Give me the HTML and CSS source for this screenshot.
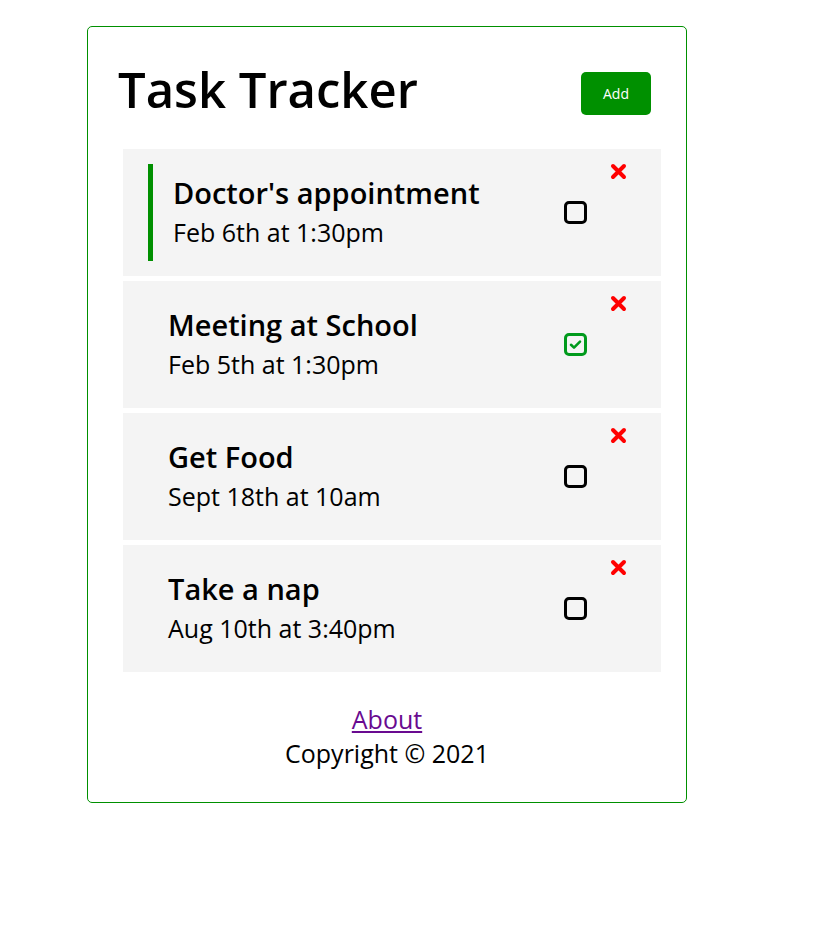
FILE: index.html
```html
<!DOCTYPE html>
<html>
<head>
<meta charset="utf-8">
<title>Task Tracker</title>
<link rel="stylesheet" href="styles.css">
</head>
<body>
<div class="container">
  <header class="header">
    <h1 class="title">Task Tracker</h1>
    <button class="btn">Add</button>
  </header>
  <div class="tasks">
    <div class="task">
      <div class="task-text reminder">
        <h3 class="task-name">Doctor's appointment</h3>
        <p class="task-day">Feb 6th at 1:30pm</p>
      </div>
      <svg class="check" viewBox="0 0 23 23" width="23" height="23"><rect x="1.5" y="1.5" width="20" height="20" rx="3.5" fill="none" stroke="#000" stroke-width="3"/></svg>
      <svg class="del" viewBox="0 0 17 17" width="17" height="17"><path d="M3 3L14 14M14 3L3 14" stroke="#ff0000" stroke-width="4" stroke-linecap="round"/></svg>
    </div>
    <div class="task">
      <div class="task-text">
        <h3 class="task-name">Meeting at School</h3>
        <p class="task-day">Feb 5th at 1:30pm</p>
      </div>
      <svg class="check" viewBox="0 0 23 23" width="23" height="23"><rect x="1.5" y="1.5" width="20" height="20" rx="3.5" fill="none" stroke="#009a1c" stroke-width="3"/><path d="M7 11.8L10 14.6L16 8.6" fill="none" stroke="#009a1c" stroke-width="2.6" stroke-linecap="round" stroke-linejoin="round"/></svg>
      <svg class="del" viewBox="0 0 17 17" width="17" height="17"><path d="M3 3L14 14M14 3L3 14" stroke="#ff0000" stroke-width="4" stroke-linecap="round"/></svg>
    </div>
    <div class="task">
      <div class="task-text">
        <h3 class="task-name">Get Food</h3>
        <p class="task-day">Sept 18th at 10am</p>
      </div>
      <svg class="check" viewBox="0 0 23 23" width="23" height="23"><rect x="1.5" y="1.5" width="20" height="20" rx="3.5" fill="none" stroke="#000" stroke-width="3"/></svg>
      <svg class="del" viewBox="0 0 17 17" width="17" height="17"><path d="M3 3L14 14M14 3L3 14" stroke="#ff0000" stroke-width="4" stroke-linecap="round"/></svg>
    </div>
    <div class="task">
      <div class="task-text">
        <h3 class="task-name">Take a nap</h3>
        <p class="task-day">Aug 10th at 3:40pm</p>
      </div>
      <svg class="check" viewBox="0 0 23 23" width="23" height="23"><rect x="1.5" y="1.5" width="20" height="20" rx="3.5" fill="none" stroke="#000" stroke-width="3"/></svg>
      <svg class="del" viewBox="0 0 17 17" width="17" height="17"><path d="M3 3L14 14M14 3L3 14" stroke="#ff0000" stroke-width="4" stroke-linecap="round"/></svg>
    </div>
  </div>
  <footer class="footer">
    <div class="footer-line"><a class="about" href="#">About</a></div>
    <div class="footer-line">Copyright © 2021</div>
  </footer>
</div>
</body>
</html>
```

FILE: styles.css
```css
* {
  box-sizing: border-box;
}

body {
  margin: 0;
  font-family: "Open Sans", "Noto Sans", sans-serif;
  color: #000;
  background: #fff;
}

.container {
  width: 600px;
  margin: 26px 0 0 87px;
  padding: 30px 30px 32px;
  border: 1px solid #009000;
  border-radius: 5px;
}

.header {
  display: flex;
  justify-content: space-between;
  align-items: center;
  height: 73px;
  margin-bottom: 19px;
}

.title {
  align-self: flex-start;
  margin: 3px 0 0 0;
  font-size: 49px;
  font-weight: 600;
  line-height: 1.2;
}

.btn {
  width: 70px;
  height: 43px;
  margin: 5px;
  border: none;
  border-radius: 5px;
  background: #009000;
  color: #fff;
  font-family: inherit;
  font-size: 14px;
  cursor: pointer;
}

.tasks {
  display: flex;
  flex-direction: column;
  gap: 5px;
}

.task {
  display: flex;
  align-items: center;
  width: 100%;
  margin-left: 5px;
  padding: 15px 25px;
  background: #f4f4f4;
}

.task-text {
  flex: 1;
  padding: 8px 0 10px 20px;
}

.task-text.reminder {
  border-left: 5px solid #009000;
}

.task-name {
  margin: 0;
  font-size: 29px;
  font-weight: 600;
  line-height: 42px;
}

.task-day {
  margin: 0;
  font-size: 25px;
  line-height: 37px;
}

.check {
  display: block;
  flex: none;
}

.del {
  display: block;
  flex: none;
  align-self: flex-start;
  margin: -1px 9px 0 23px;
}

.footer {
  margin-top: 30px;
  text-align: center;
  font-size: 25px;
}

.footer-line {
  line-height: 34px;
}

.about {
  color: #690a90;
}
```
